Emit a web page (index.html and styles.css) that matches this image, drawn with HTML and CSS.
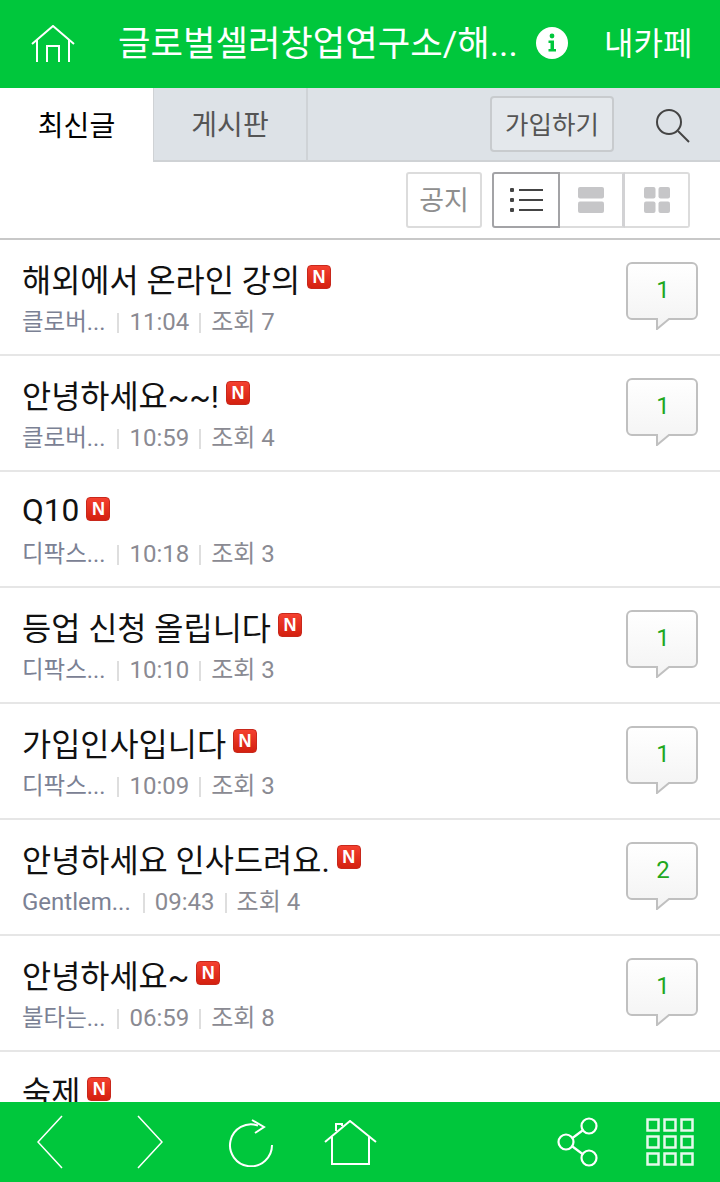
FILE: index.html
```html
<!DOCTYPE html>
<html lang="ko">
<head>
  <meta charset="UTF-8" />
  <meta name="viewport" content="width=device-width, initial-scale=1.0"/>
  <title>최신글</title>
  <link rel="stylesheet" href="styles.css">
</head>
<body>

<svg class="defs" width="0" height="0">
  <defs>
    <linearGradient id="bubble-fill" x1="0" y1="0" x2="0" y2="1">
      <stop offset="0" stop-color="#ffffff"/>
      <stop offset="1" stop-color="#f3f3f3"/>
    </linearGradient>
    <symbol id="bubble" viewBox="0 0 72 68">
      <path d="M6 1H66a5 5 0 0 1 5 5V52a5 5 0 0 1-5 5H43L31 67V57H6a5 5 0 0 1-5-5V6a5 5 0 0 1 5-5Z" fill="url(#bubble-fill)" stroke="#c0c0c0" stroke-width="2"/>
    </symbol>
  </defs>
</svg>

<div class="app">
  <header class="topbar">
    <svg class="home-icon" width="44" height="38" viewBox="0 0 44 38" fill="none" stroke="#fff" stroke-width="2">
      <path d="M1 19 22 1 43 19"/>
      <path d="M6 15V37M38 15V37"/>
      <path d="M16 37V21H28V37"/>
    </svg>
    <h1 class="cafe-title">글로벌셀러창업연구소/해...</h1>
    <svg class="info-icon" width="32" height="32" viewBox="0 0 32 32">
      <circle cx="16" cy="16" r="16" fill="#fff"/>
      <circle cx="16" cy="9" r="2.4" fill="#00c73c"/>
      <path d="M12.5 13.5H18V22H20V24.500H12.500V22H14.500V16H12.500Z" fill="#00c73c"/>
    </svg>
    <span class="my-cafe">내카페</span>
  </header>

  <nav class="tabs">
    <div class="tab tab-active">최신글</div>
    <div class="tab">게시판</div>
    <div class="tabs-right">
      <div class="join-btn">가입하기</div>
      <svg class="search-icon" width="36" height="36" viewBox="0 0 36 36" fill="none" stroke="#444" stroke-width="2">
        <circle cx="14" cy="14" r="12"/>
        <path d="M23 23 34 34"/>
      </svg>
    </div>
  </nav>

  <div class="toolbar">
    <div class="notice-btn">공지</div>
    <div class="view-group">
      <div class="view-btn view-active">
        <svg width="34" height="26" viewBox="0 0 34 26">
          <g fill="#444">
            <rect x="1" y="1" width="4" height="4" rx="1"/><rect x="1" y="11" width="4" height="4" rx="1"/><rect x="1" y="21" width="4" height="4" rx="1"/>
            <rect x="10" y="2" width="24" height="2"/><rect x="10" y="12" width="24" height="2"/><rect x="10" y="22" width="24" height="2"/>
          </g>
        </svg>
      </div>
      <div class="view-btn">
        <svg width="26" height="26" viewBox="0 0 26 26">
          <g fill="#c6c6c8">
            <rect width="26" height="11.500" rx="2"/><rect y="14.500" width="26" height="11.500" rx="2"/>
          </g>
        </svg>
      </div>
      <div class="view-btn">
        <svg width="26" height="26" viewBox="0 0 26 26">
          <g fill="#c6c6c8">
            <rect width="11.500" height="11.500" rx="2"/><rect x="14.500" width="11.500" height="11.500" rx="2"/>
            <rect y="14.500" width="11.500" height="11.500" rx="2"/><rect x="14.500" y="14.500" width="11.500" height="11.500" rx="2"/>
          </g>
        </svg>
      </div>
    </div>
  </div>

  <ul class="post-list">
    <li class="post">
      <div class="post-body">
        <div class="post-title">해외에서 온라인 강의<span class="new-badge">N</span></div>
        <div class="post-meta"><span class="nick">클로버...</span><span class="meta-item">11:04</span><span class="meta-item">조회 7</span></div>
      </div>
      <div class="comment-count"><svg width="72" height="68"><use href="#bubble"/></svg><span>1</span></div>
    </li>
    <li class="post">
      <div class="post-body">
        <div class="post-title">안녕하세요~~!<span class="new-badge">N</span></div>
        <div class="post-meta"><span class="nick">클로버...</span><span class="meta-item">10:59</span><span class="meta-item">조회 4</span></div>
      </div>
      <div class="comment-count"><svg width="72" height="68"><use href="#bubble"/></svg><span>1</span></div>
    </li>
    <li class="post">
      <div class="post-body">
        <div class="post-title">Q10<span class="new-badge">N</span></div>
        <div class="post-meta"><span class="nick">디팍스...</span><span class="meta-item">10:18</span><span class="meta-item">조회 3</span></div>
      </div>
    </li>
    <li class="post">
      <div class="post-body">
        <div class="post-title">등업 신청 올립니다<span class="new-badge">N</span></div>
        <div class="post-meta"><span class="nick">디팍스...</span><span class="meta-item">10:10</span><span class="meta-item">조회 3</span></div>
      </div>
      <div class="comment-count"><svg width="72" height="68"><use href="#bubble"/></svg><span>1</span></div>
    </li>
    <li class="post">
      <div class="post-body">
        <div class="post-title">가입인사입니다<span class="new-badge">N</span></div>
        <div class="post-meta"><span class="nick">디팍스...</span><span class="meta-item">10:09</span><span class="meta-item">조회 3</span></div>
      </div>
      <div class="comment-count"><svg width="72" height="68"><use href="#bubble"/></svg><span>1</span></div>
    </li>
    <li class="post">
      <div class="post-body">
        <div class="post-title">안녕하세요 인사드려요.<span class="new-badge">N</span></div>
        <div class="post-meta"><span class="nick nick-latin">Gentlem...</span><span class="meta-item">09:43</span><span class="meta-item">조회 4</span></div>
      </div>
      <div class="comment-count"><svg width="72" height="68"><use href="#bubble"/></svg><span>2</span></div>
    </li>
    <li class="post">
      <div class="post-body">
        <div class="post-title">안녕하세요~<span class="new-badge">N</span></div>
        <div class="post-meta"><span class="nick">불타는...</span><span class="meta-item">06:59</span><span class="meta-item">조회 8</span></div>
      </div>
      <div class="comment-count"><svg width="72" height="68"><use href="#bubble"/></svg><span>1</span></div>
    </li>
    <li class="post">
      <div class="post-body">
        <div class="post-title">숙제<span class="new-badge">N</span></div>
      </div>
    </li>
  </ul>

  <footer class="bottombar">
    <svg class="nav-back" width="26" height="54" viewBox="0 0 26 54" fill="none" stroke="#fff" stroke-width="1.500"><path d="M25 1 1 27 25 53"/></svg>
    <svg class="nav-forward" width="26" height="54" viewBox="0 0 26 54" fill="none" stroke="#fff" stroke-width="1.500"><path d="M1 1 25 27 1 53"/></svg>
    <svg class="nav-reload" width="46" height="48" viewBox="0 0 46 48" fill="none" stroke="#fff" stroke-width="2"><path d="M44 26A21 21 0 1 1 30 6.500"/><path d="M24 1 36 8 27 14"/></svg>
    <svg class="nav-home" width="54" height="46" viewBox="0 0 54 46" fill="none" stroke="#fff" stroke-width="2"><path d="M1 22 26 1 52 22"/><path d="M8 17V44H45V17"/><path d="M12 11V4H18V6"/></svg>
    <svg class="nav-share" width="42" height="50" viewBox="0 0 42 50" fill="none" stroke="#fff" stroke-width="2.200"><circle cx="9" cy="25" r="7.500"/><circle cx="32" cy="9" r="7.500"/><circle cx="32" cy="41" r="7.500"/><path d="M15.500 21 25.500 13.500M15.500 29.500 25.500 37"/></svg>
    <svg class="nav-apps" width="48" height="48" viewBox="0 0 48 48" fill="none" stroke="#fff" stroke-width="2.500" opacity="0.9">
      <rect x="1.500" y="1.500" width="11" height="11"/><rect x="18.500" y="1.500" width="11" height="11"/><rect x="35.500" y="1.500" width="11" height="11"/>
      <rect x="1.500" y="18.500" width="11" height="11"/><rect x="18.500" y="18.500" width="11" height="11"/><rect x="35.500" y="18.500" width="11" height="11"/>
      <rect x="1.500" y="35.500" width="11" height="11"/><rect x="18.500" y="35.500" width="11" height="11"/><rect x="35.500" y="35.500" width="11" height="11"/>
    </svg>
  </footer>
</div>

</body>
</html>
```

FILE: styles.css
```css
* {
  box-sizing: border-box;
}

body {
  margin: 0;
  font-family: Roboto, "Noto Sans CJK KR", sans-serif;
  background: #fff;
}

.defs {
  display: block;
  height: 0;
}

.app {
  height: 1182px;
  display: flex;
  flex-direction: column;
  overflow: hidden;
}

/* top green bar */
.topbar {
  height: 88px;
  flex: none;
  background: #00c73c;
  display: flex;
  align-items: center;
  color: #fff;
  padding-left: 31px;
}

.home-icon {
  flex: none;
  margin-right: 43px;
}

.cafe-title {
  width: 399px;
  flex: none;
  margin: 0;
  font-size: 35.300px;
  line-height: 48px;
  font-weight: 400;
  white-space: nowrap;
}

.info-icon {
  flex: none;
  margin: 0 0 2px 19px;
}

.my-cafe {
  margin: 0 0 0 36px;
  font-size: 32px;
  line-height: 44px;
  white-space: nowrap;
}

/* tabs */
.tabs {
  height: 74px;
  flex: none;
  display: flex;
  background: #dde2e7;
  border-bottom: 2px solid #cfd2d5;
}

.tab {
  width: 154px;
  height: 72px;
  display: flex;
  align-items: center;
  justify-content: center;
  padding-bottom: 2px;
  font-size: 28px;
  color: #555;
  border-right: 2px solid #cfd3d7;
}

.tab-active {
  height: 74px;
  color: #000;
  background: #fff;
  border-right: 1px solid #cfd2d5;
}

.tabs-right {
  margin-left: auto;
  display: flex;
  align-items: flex-start;
  padding: 8px 29px 0 0;
}

.join-btn {
  width: 124px;
  height: 56px;
  display: flex;
  align-items: center;
  justify-content: center;
  padding-bottom: 4px;
  font-size: 25.500px;
  color: #555;
  background: #e4e8ec;
  border: 2px solid #c8cbce;
  border-radius: 4px;
}

.search-icon {
  margin: 12px 0 0 41px;
}

/* notice and view switch */
.toolbar {
  height: 78px;
  flex: none;
  display: flex;
  justify-content: flex-end;
  gap: 10px;
  padding: 10px 30px 0 0;
  border-bottom: 2px solid #c8c8c8;
}

.notice-btn {
  width: 76px;
  height: 56px;
  display: flex;
  align-items: center;
  justify-content: center;
  padding-bottom: 4px;
  font-size: 27px;
  color: #8e8e8e;
  border: 2px solid #dcdcdc;
  border-radius: 3px;
}

.view-group {
  display: flex;
  height: 56px;
}

.view-btn {
  width: 65px;
  display: flex;
  align-items: center;
  justify-content: center;
  border: 2px solid #dcdcdc;
  border-left: 0;
  border-radius: 0 3px 3px 0;
}

.view-active {
  width: 68px;
  border: 2px solid #a3a3a6;
  border-radius: 3px 0 0 3px;
}

.view-btn:nth-child(2) {
  border-radius: 0;
  border-right-width: 3px;
  border-right-color: #d2d2d4;
}

/* posts */
.post-list {
  flex: 1;
  min-height: 0;
  margin: 0;
  padding: 0;
  list-style: none;
  overflow: hidden;
}

.post {
  height: 116px;
  display: flex;
  align-items: flex-start;
  justify-content: space-between;
  padding: 0 22px;
  border-bottom: 2px solid #e6e6e6;
}

.post-title {
  display: flex;
  align-items: center;
  height: 36px;
  margin-top: 20px;
  font-size: 31.700px;
  color: #111;
  white-space: nowrap;
}

.new-badge {
  width: 24px;
  height: 24px;
  margin: 5px 0 0 7px;
  align-self: flex-start;
  display: flex;
  align-items: center;
  justify-content: center;
  font-family: "Liberation Sans", sans-serif;
  font-size: 18px;
  font-weight: 700;
  color: #fff;
  background: linear-gradient(#f4402f, #d4200f);
  border: 1px solid #c8281c;
  border-radius: 4px;
}

.post-meta {
  display: flex;
  align-items: baseline;
  height: 30px;
  margin-top: 11px;
  font-size: 24px;
  line-height: 30px;
  color: #8a8a92;
  white-space: nowrap;
}

.nick {
  margin-right: 1px;
  font-size: 23.500px;
  color: #7b8194;
}

.nick-latin {
  font-size: 24px;
}

.meta-item {
  margin-left: 11px;
}

.meta-item + .meta-item {
  margin-left: 10px;
}

.meta-item::before {
  content: "";
  display: inline-block;
  width: 2px;
  height: 20px;
  margin-right: 10px;
  vertical-align: -3px;
  background: #dedede;
}

.comment-count {
  display: grid;
  width: 72px;
  height: 68px;
  margin-top: 22px;
  flex: none;
}

.comment-count svg,
.comment-count span {
  grid-area: 1 / 1;
}

.comment-count span {
  justify-self: center;
  margin: 12px 0 0 2px;
  font-size: 24px;
  line-height: 32px;
  color: #22a81e;
}

/* bottom green bar */
.bottombar {
  height: 80px;
  flex: none;
  background: #00c73c;
  display: flex;
  align-items: center;
}

.nav-back {
  margin-left: 37px;
}

.nav-forward {
  margin-left: 74px;
}

.nav-reload {
  margin-left: 65px;
  margin-top: 2px;
}

.nav-home {
  margin-left: 50px;
  margin-top: 2px;
}

.nav-share {
  margin-left: 179px;
}

.nav-apps {
  margin-left: 47px;
}
```
